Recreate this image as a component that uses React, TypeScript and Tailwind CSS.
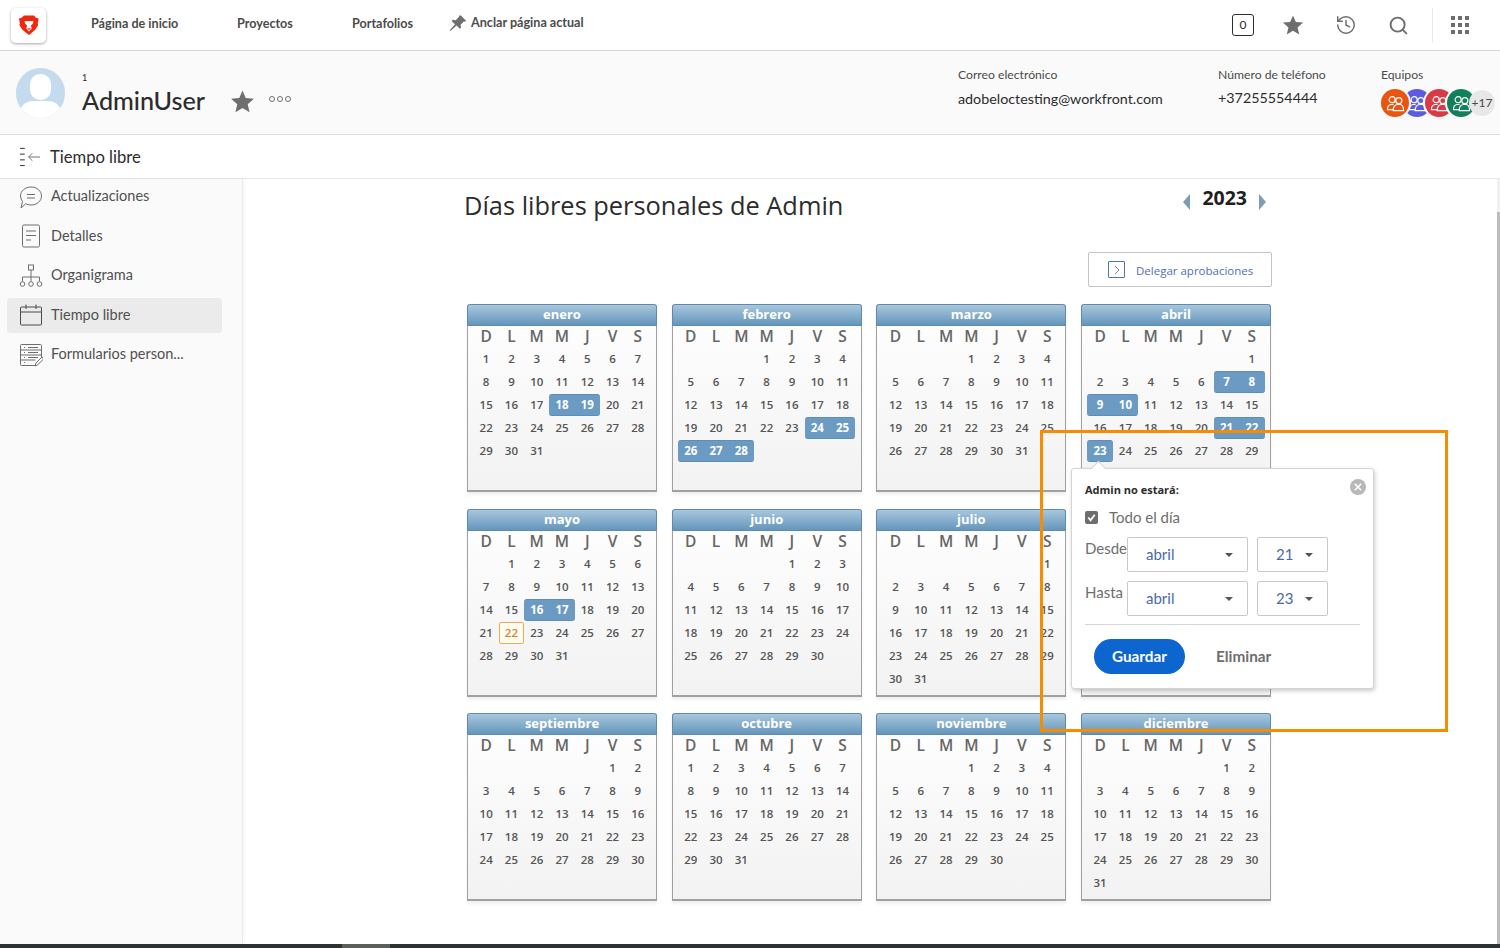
import { History, Search } from 'lucide-react';

const cleanFont = "font-['Lato','Noto_Sans',sans-serif]";
const calFont = "font-['Open_Sans','Liberation_Sans',sans-serif]";

interface Mes {
  nombre: string;
  inicio: number;
  dias: number;
  libres?: number[];
}

const meses: Mes[] = [
  { nombre: 'enero', inicio: 0, dias: 31, libres: [18, 19] },
  { nombre: 'febrero', inicio: 3, dias: 28, libres: [24, 25, 26, 27, 28] },
  { nombre: 'marzo', inicio: 3, dias: 31 },
  { nombre: 'abril', inicio: 6, dias: 30, libres: [7, 8, 9, 10, 21, 22, 23] },
  { nombre: 'mayo', inicio: 1, dias: 31, libres: [16, 17] },
  { nombre: 'junio', inicio: 4, dias: 30 },
  { nombre: 'julio', inicio: 6, dias: 31 },
  { nombre: 'agosto', inicio: 2, dias: 31 },
  { nombre: 'septiembre', inicio: 5, dias: 30 },
  { nombre: 'octubre', inicio: 0, dias: 31 },
  { nombre: 'noviembre', inicio: 3, dias: 30 },
  { nombre: 'diciembre', inicio: 5, dias: 31 },
];

const letras = ['D', 'L', 'M', 'M', 'J', 'V', 'S'];

function Estrella({ className }: { className: string }) {
  return (
    <svg viewBox="0 0 24 24" className={className} fill="#6e6e6e">
      <path d="M12 1.500l3.100 7.200 7.900.7-6 5.200 1.800 7.700L12 18.200l-6.800 4.100L7 14.600 1 9.400l7.900-.7z" />
    </svg>
  );
}

function IconoEquipo() {
  return (
    <svg viewBox="0 0 20 20" className="h-[19px] w-[19px]" fill="none" stroke="white" strokeWidth="1.200">
      <circle cx="6.500" cy="6" r="3.200" />
      <circle cx="13.500" cy="7" r="3.200" />
      <path d="M8 16.500H1.500c0-3 1-5 3.500-5.500h3" />
      <path d="M7.500 17.500c0-3.500 1.500-6 4.500-6.500h3c2.500.5 3.500 3 3.500 6.500z" />
    </svg>
  );
}

function Calendario({ mes }: { mes: Mes }) {
  const libres = mes.libres ?? [];
  const celdas: (number | null)[] = [];
  for (let i = 0; i < mes.inicio; i++) celdas.push(null);
  for (let d = 1; d <= mes.dias; d++) celdas.push(d);

  return (
    <div className={`h-[188px] rounded-t-[3px] border-x border-b-2 border-[#a0a0a0] bg-gradient-to-b from-white to-[#f2f2f2] shadow-[0_3px_3px_rgba(0,0,0,0.06)] ${calFont}`}>
      <div className="-mx-px h-[22px] rounded-t-[3px] border border-[#5f8aad] bg-gradient-to-b from-[#a9c7dc] to-[#6496bc] text-center text-[13px] leading-[18px] font-bold text-white">
        {mes.nombre}
      </div>
      <div className="px-[5.500px]">
        <div className="grid h-[22px] grid-cols-7 items-center text-center text-[15.500px] leading-[20px] font-semibold text-[#666666]">
          {letras.map((l, i) => (
            <span key={i} className="-translate-y-px">{l}</span>
          ))}
        </div>
        <div className="grid grid-cols-7 auto-rows-[23px] text-center text-[11.500px] font-semibold text-[#555555]">
          {celdas.map((d, i) => {
            if (d === null) return <span key={i} />;
            const libre = libres.includes(d);
            const hoy = mes.nombre === 'mayo' && d === 22;
            const col = i % 7;
            const antes = libres.includes(d - 1) && col !== 0;
            const despues = libres.includes(d + 1) && col !== 6;
            if (libre) {
              return (
                <span
                  key={i}
                  className={`flex h-[22px] items-center justify-center border-y border-[#5c8fb8] bg-[#6b9bc3] font-bold text-white ${antes ? '' : 'rounded-l-[3px]'} ${despues ? '' : 'rounded-r-[3px]'}`}
                >
                  {d}
                </span>
              );
            }
            if (hoy) {
              return (
                <span key={i} className="flex h-[22px] items-center justify-center rounded-[2px] border border-[#f0a95a] bg-[#fffdf0] text-[#d9822b]">
                  {d}
                </span>
              );
            }
            return (
              <span key={i} className="flex h-[22px] items-center justify-center">
                {d}
              </span>
            );
          })}
        </div>
      </div>
    </div>
  );
}

function Selector({ valor, ancho }: { valor: string; ancho: string }) {
  return (
    <div className={`flex h-[35px] items-center justify-between rounded-[2px] border border-[#c9c9c9] bg-white pl-[18px] pr-[14px] text-[15px] text-[#4a6aa5] ${ancho}`}>
      <span>{valor}</span>
      <span className="h-0 w-0 border-x-[4px] border-t-[4px] border-x-transparent border-t-[#555555]" />
    </div>
  );
}

const menu = [
  {
    texto: 'Actualizaciones',
    icono: (
      <svg viewBox="0 0 24 24" className="h-[26px] w-[24px]" fill="none" stroke="#6e6e6e" strokeWidth="1">
        <path d="M2 23l1.500-6.500A10.300 10.300 0 0 1 1.500 11C1.500 6 6 2 12 2s10.500 4 10.500 9-4.500 9-10.500 9c-2 0-3.800-.4-5.300-1.200z" />
        <path d="M8 9.500h8M8 13h8" />
      </svg>
    ),
  },
  {
    texto: 'Detalles',
    icono: (
      <svg viewBox="0 0 24 24" className="h-[24px] w-[24px]" fill="none" stroke="#6e6e6e" strokeWidth="1">
        <rect x="3.500" y="1" width="17" height="22" rx="1.500" />
        <path d="M7 7h10M7 11.500h10M7 16h5" />
      </svg>
    ),
  },
  {
    texto: 'Organigrama',
    icono: (
      <svg viewBox="0 0 24 24" className="h-[24px] w-[24px]" fill="none" stroke="#6e6e6e" strokeWidth="1">
        <rect x="9.500" y="1" width="5" height="5" />
        <path d="M12 6v11M3.500 17v-4h17v4" />
        <circle cx="3.500" cy="20" r="2.300" />
        <circle cx="12" cy="20" r="2.300" />
        <circle cx="20.500" cy="20" r="2.300" />
      </svg>
    ),
  },
  {
    texto: 'Tiempo libre',
    icono: (
      <svg viewBox="0 0 24 24" className="h-[24px] w-[24px]" fill="none" stroke="#4b4b4b" strokeWidth="1">
        <rect x="1.500" y="4" width="21" height="18" rx="1" />
        <path d="M1.500 9h21M7 1.500V6M17 1.500V6" />
      </svg>
    ),
  },
  {
    texto: 'Formularios person...',
    icono: (
      <svg viewBox="0 0 24 24" className="h-[24px] w-[24px]" fill="none" stroke="#6e6e6e" strokeWidth="1">
        <path d="M17 22.500H2.500a1 1 0 0 1-1-1v-19a1 1 0 0 1 1-1h19a1 1 0 0 1 1 1V15" />
        <path d="M1.500 7h21M1.500 12h21M1.500 17h15M5 4.500h1M5 9.500h1M5 14.500h1M5 19.500h1M9 4.500h10M9 9.500h10M9 14.500h10" />
        <path d="M16 23l1-3 6-6 1.500 2-6 6z" fill="white" />
      </svg>
    ),
  },
];

export default function App() {
  return (
    <div className={`relative flex h-[948px] w-[1500px] flex-col overflow-hidden bg-white ${cleanFont}`}>
      {/* barra superior */}
      <header className="flex h-[51px] shrink-0 items-center border-b border-[#d6d6d6] bg-white pl-[11px]">
        <div className="flex h-[35px] w-[35px] items-center justify-center rounded-[5px] bg-white shadow-[0_1px_3px_rgba(0,0,0,0.35)]">
          <svg viewBox="0 0 24 24" className="h-[22px] w-[22px]">
            <path d="M6.500 1.500h11l2 2.500 3 1-1 5 .5 2-3 5-6.500 5.500h-1L4.500 17l-3-5 .5-2-1-5 3-1z" fill="#f2260f" />
            <path d="M7 8l3.500-.5h3L17 8l-1 3-2 1.500 1 3-3 3.500-3-3.500 1-3L8 11z" fill="white" />
            <path d="M10 15.500h4L12 17.500z" fill="#f2260f" />
          </svg>
        </div>
        <nav className="ml-[45px] flex items-center text-[12.600px] font-bold text-[#4b4b4b]">
          <span className="w-[146px] -translate-y-px">Página de inicio</span>
          <span className="w-[115px] -translate-y-px">Proyectos</span>
          <span className="w-[97px] -translate-y-px">Portafolios</span>
          <svg viewBox="0 0 24 24" className="mr-[4px] h-[19px] w-[18px] -translate-y-[2px]" fill="#6e6e6e">
            <path d="M15.500 1L23 8.500l-2 1-1-.5-4.500 4.500.5 4-1.500 1.500-4.500-4.500L2 22l-1-1 7-8-4.500-4.500L5 7l4 .5L13.500 3 13 2z" />
          </svg>
          <span className="-translate-y-[2px]">Anclar página actual</span>
        </nav>
        <div className="ml-auto flex h-full items-center">
          <span className="flex h-[22px] w-[22px] items-center justify-center rounded-[3px] border border-[#2c2c2c] text-[12px] text-[#2c2c2c]">0</span>
          <Estrella className="ml-[28px] h-[22px] w-[22px]" />
          <History className="ml-[31px] h-[22px] w-[22px] text-[#6e6e6e]" strokeWidth={1.6} />
          <Search className="ml-[31px] h-[21px] w-[21px] text-[#6e6e6e]" strokeWidth={2.200} />
          <div className="ml-[23px] h-[35px] w-px bg-[#e8e8e8]" />
          <div className="ml-[18px] mr-[31px] grid grid-cols-3 gap-[3px]">
            {Array.from({ length: 9 }).map((_, i) => (
              <span key={i} className="h-[4px] w-[4px] bg-[#6e6e6e]" />
            ))}
          </div>
        </div>
      </header>

      {/* cabecera de usuario */}
      <section className="flex h-[84px] shrink-0 items-center border-b border-[#e1e1e1] bg-[#fafafa] pl-[16px]">
        <div className="relative h-[50px] w-[49px] overflow-hidden rounded-full bg-[#c3dbed]">
          <div className="absolute left-[14px] top-[6px] h-[26px] w-[21px] rounded-[10px] bg-white" />
          <div className="absolute left-[3px] top-[33px] h-[20px] w-[43px] rounded-t-[14px] bg-white" />
        </div>
        <div className="ml-[17px] mt-[4px] text-[#2c2c2c]">
          <div className="text-[9px] leading-[10px]">1</div>
          <div className="mt-[1px] text-[25.200px] leading-[32px] font-medium">AdminUser</div>
        </div>
        <Estrella className="ml-[25px] mt-[17px] h-[25px] w-[25px]" />
        <div className="ml-[14px] mt-[12px] flex gap-[2px]">
          <span className="h-[6px] w-[6px] rounded-full border border-[#6e6e6e]" />
          <span className="h-[6px] w-[6px] rounded-full border border-[#6e6e6e]" />
          <span className="h-[6px] w-[6px] rounded-full border border-[#6e6e6e]" />
        </div>
        <div className="ml-auto flex -translate-y-px">
          <div className="w-[260px]">
            <div className="text-[12.200px] leading-[18px] text-[#4b4b4b]">Correo electrónico</div>
            <div className="mt-[5px] text-[14.300px] leading-[20px] text-[#2c2c2c]">adobeloctesting@workfront.com</div>
          </div>
          <div className="w-[163px]">
            <div className="text-[12.200px] leading-[18px] text-[#4b4b4b]">Número de teléfono</div>
            <div className="mt-[4px] text-[14.300px] leading-[20px] text-[#2c2c2c]">+37255554444</div>
          </div>
          <div className="w-[119px]">
            <div className="text-[12.200px] leading-[18px] text-[#4b4b4b]">Equipos</div>
            <div className="mt-[5px] flex">
              <span className="z-10 flex h-[28px] w-[28px] items-center justify-center rounded-full bg-[#e8560f] ring-2 ring-[#fafafa]"><IconoEquipo /></span>
              <span className="-ml-[6px] flex h-[28px] w-[28px] items-center justify-center rounded-full bg-[#5c5ce0] ring-2 ring-[#fafafa]"><IconoEquipo /></span>
              <span className="-ml-[6px] flex h-[28px] w-[28px] items-center justify-center rounded-full bg-[#d83a46] ring-2 ring-[#fafafa]"><IconoEquipo /></span>
              <span className="-ml-[6px] flex h-[28px] w-[28px] items-center justify-center rounded-full bg-[#12805c] ring-2 ring-[#fafafa]"><IconoEquipo /></span>
              <span className="-ml-[6px] flex h-[26px] w-[26px] items-center justify-center self-center rounded-full bg-[#e8e8e8] text-[12px] text-[#4b4b4b]">+17</span>
            </div>
          </div>
        </div>
      </section>

      {/* subtitulo */}
      <section className="flex h-[44px] shrink-0 items-center border-b border-[#e6e6e6] bg-white pl-[20px]">
        <svg viewBox="0 0 22 22" className="h-[22px] w-[21px]" fill="none" stroke="#6e6e6e" strokeWidth="1">
          <path d="M0 2h5M0 8h5M0 14h5M0 20h5" stroke="#2c2c2c" />
          <path d="M9 11h12M13 7l-4 4 4 4" />
        </svg>
        <h2 className="ml-[9px] translate-y-px text-[16.600px] text-[#2c2c2c]">Tiempo libre</h2>
      </section>

      <div className="flex min-h-0 flex-1">
        {/* menu lateral */}
        <aside className="w-[243px] shrink-0 border-r border-[#ebebeb] bg-[#fafafa] pl-[7px] pr-[20px] shadow-[1px_0_3px_rgba(0,0,0,0.05)]">
          {menu.map((m) => (
            <div
              key={m.texto}
              className={`mb-[4.500px] flex h-[35px] items-center rounded-[4px] pl-[12px] text-[14.500px] text-[#505050] ${m.texto === 'Tiempo libre' ? 'bg-[#ebebeb]' : ''}`}
            >
              <span className="flex w-[32px] shrink-0 items-center">{m.icono}</span>
              <span className={m.texto === 'Detalles' || m.texto === 'Tiempo libre' ? '' : '-translate-y-px'}>{m.texto}</span>
            </div>
          ))}
        </aside>

        {/* contenido */}
        <main className={`min-w-0 flex-1 pl-[221px] ${calFont}`}>
          <div className="flex h-[73px] w-[803px] items-start justify-between">
            <h1 className="mt-[10px] text-[25.400px] leading-[32px] text-[#2c2c2c]">Días libres personales de Admin</h1>
            <div className="mr-[1px] mt-[6px] flex items-center">
              <span className="mt-[9px] h-0 w-0 border-y-[8px] border-r-[7px] border-y-transparent border-r-[#7d9cba]" />
              <span className="mx-[12px] text-[19.500px] leading-[24px] font-bold text-[#1f1f1f]">2023</span>
              <span className="mt-[9px] h-0 w-0 border-y-[8px] border-l-[7px] border-y-transparent border-l-[#7d9cba]" />
            </div>
          </div>
          <div className="flex w-[808px] justify-end">
            <button className="flex h-[35px] w-[184px] items-center rounded-[2px] border border-[#c4c4c4] bg-white pl-[19px] text-[11.500px] text-[#5070b5]">
              <span className="flex h-[17px] w-[17px] items-center justify-center rounded-[1px] border border-[#4a76ad]">
                <svg viewBox="0 0 10 10" className="h-[10px] w-[10px]" fill="none" stroke="#6e6e6e" strokeWidth="0.800"><path d="M3 1l4 4-4 4" /></svg>
              </span>
              <span className="ml-[11px] translate-y-px">Delegar aprobaciones</span>
            </button>
          </div>
          <div className="ml-[3px] mt-[17px] grid w-[804px] grid-cols-4 gap-x-[14.670px] gap-y-[16.500px]">
            {meses.map((m) => (
              <Calendario key={m.nombre} mes={m} />
            ))}
          </div>
        </main>
      </div>

      <div className="relative h-[4px] shrink-0 bg-[#2d3333]">
        <div className="absolute left-[342px] top-0 h-[4px] w-[48px] bg-[#5a5f5a]" />
      </div>

      {/* barra de scroll */}
      <div className="absolute right-0 top-[179px] h-[765px] w-[3px] bg-[#f0f0f0]">
        <div className="mt-[33px] h-[732px] bg-[#bdbdbd]" />
      </div>

      {/* popover */}
      <div className="absolute left-[1071px] top-[468px] h-[221px] w-[303px] rounded-[3px] border border-[#d4d4d4] bg-white px-[13px] pt-[14px] shadow-[1px_2px_4px_rgba(0,0,0,0.2)]">
        <div className="absolute -top-[6px] left-[21px] h-[11px] w-[11px] rotate-45 border-l border-t border-[#d4d4d4] bg-white" />
        <div className="absolute right-[7px] top-[10px] flex h-[16px] w-[16px] items-center justify-center rounded-full bg-[#b8b8b8]">
          <svg viewBox="0 0 10 10" className="h-[8px] w-[8px]" stroke="white" strokeWidth="2"><path d="M1 1l8 8M9 1l-8 8" /></svg>
        </div>
        <div className={`text-[11px] leading-[14px] font-bold text-[#2c2c2c] ${calFont}`}>Admin no estará:</div>
        <div className="mt-[10px] flex items-center">
          <span className="flex h-[13px] w-[13px] items-center justify-center rounded-[2px] bg-[#6e6e6e]">
            <svg viewBox="0 0 12 12" className="h-[11px] w-[11px]" fill="none" stroke="white" strokeWidth="2"><path d="M2.500 6l2.500 3 4.500-6" /></svg>
          </span>
          <span className="ml-[11px] text-[15px] leading-[20px] text-[#6e6e6e]">Todo el día</span>
        </div>
        <div className="mt-[10px] flex items-start">
          <span className="w-[42px] text-[15px] leading-[22px] text-[#6e6e6e]">Desde</span>
          <Selector valor="abril" ancho="w-[121px]" />
          <span className="ml-[9px]"><Selector valor="21" ancho="w-[71px]" /></span>
        </div>
        <div className="mt-[9px] flex items-start">
          <span className="w-[42px] text-[15px] leading-[22px] text-[#6e6e6e]">Hasta</span>
          <Selector valor="abril" ancho="w-[121px]" />
          <span className="ml-[9px]"><Selector valor="23" ancho="w-[71px]" /></span>
        </div>
        <div className="mt-[8px] h-px w-[275px] bg-[#d6d6d6]" />
        <div className="mt-[14px] flex items-center pl-[9px]">
          <span className="flex h-[35px] w-[91px] items-center justify-center rounded-full bg-[#0d66d0] text-[15.300px] font-bold text-white">Guardar</span>
          <span className="ml-[31px] text-[15.300px] font-bold text-[#6e6e6e]">Eliminar</span>
        </div>
      </div>

      {/* marco naranja */}
      <div className="absolute left-[1040px] top-[430px] h-[302px] w-[408px] border-[3px] border-[#f78c00]" />
    </div>
  );
}
